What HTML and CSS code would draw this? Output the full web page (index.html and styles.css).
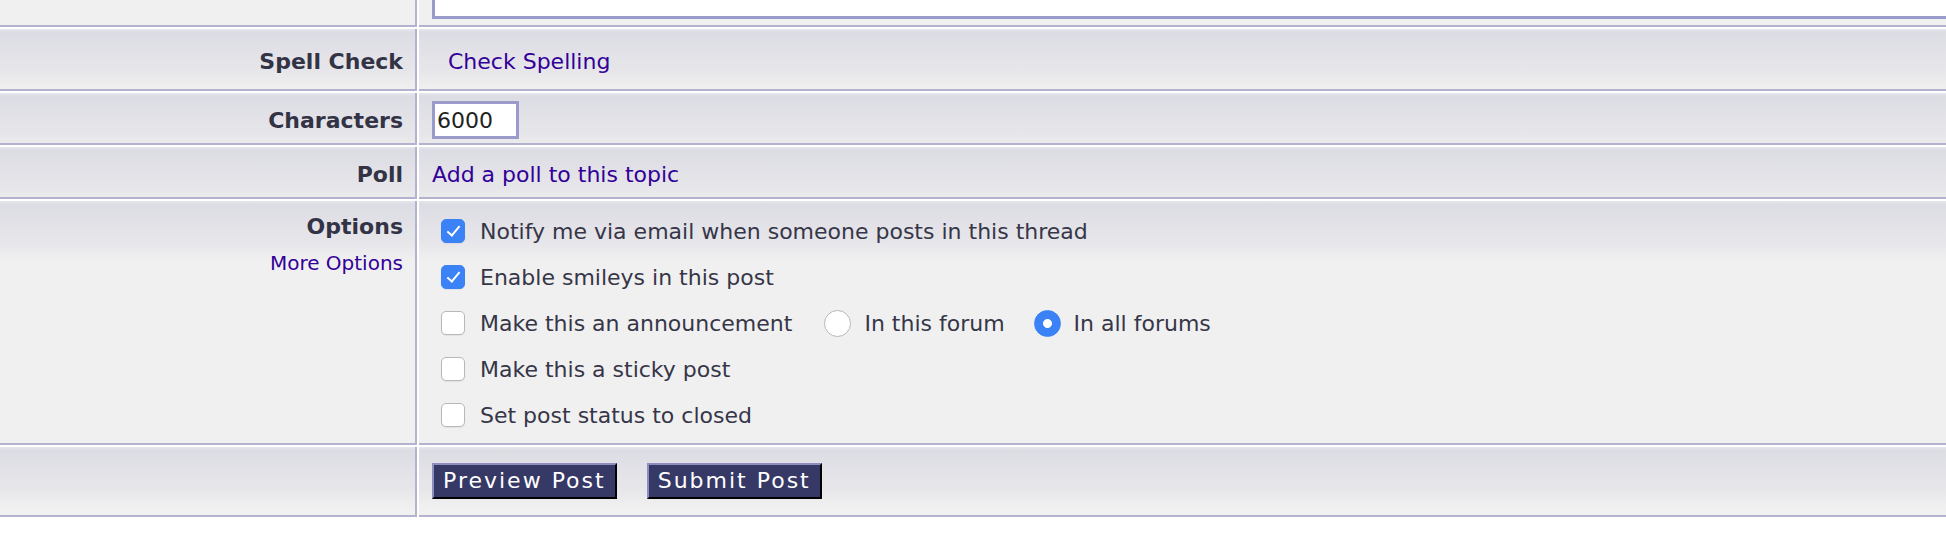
FILE: index.html
```html
<!DOCTYPE html>
<html lang="en">

<head>
    <meta charset="UTF-8">
    <title>Post Reply</title>
    <link rel="stylesheet" href="styles.css">
</head>

<body>
    <form id="post">
        <table id="form">
            <tr class="msg">
                <td class="label"></td>
                <td class="field"><textarea class="body"></textarea></td>
            </tr>
            <tr class="line">
                <td class="label spell-row">Spell Check</td>
                <td class="field spell-row"><a class="spell" href="javascript:;">Check Spelling</a></td>
            </tr>
            <tr class="line">
                <td class="label">Characters</td>
                <td class="field"><input class="count" type="text" value="6000"></td>
            </tr>
            <tr class="line">
                <td class="label">Poll</td>
                <td class="field"><a href="javascript:;">Add a poll to this topic</a></td>
            </tr>
            <tr class="opts">
                <td class="label">
                    Options
                    <a class="more" href="javascript:;">More Options</a>
                </td>
                <td class="field">
                    <label class="opt"><input type="checkbox" checked>Notify me via email when someone posts in this thread</label>
                    <label class="opt"><input type="checkbox" checked>Enable smileys in this post</label>
                    <div class="opt">
                        <input type="checkbox">Make this an announcement
                        <input class="first" type="radio" name="where">In this forum
                        <input type="radio" name="where" checked>In all forums
                    </div>
                    <label class="opt"><input type="checkbox">Make this a sticky post</label>
                    <label class="opt"><input type="checkbox">Set post status to closed</label>
                </td>
            </tr>
            <tr class="btns">
                <td class="label"></td>
                <td class="field">
                    <div class="buttons">
                        <button type="button">Preview Post</button>
                        <button type="button">Submit Post</button>
                    </div>
                </td>
            </tr>
        </table>
    </form>
</body>

</html>
```

FILE: styles.css
```css
body {
    margin: 0;
    background: #fff;
    font-family: "DejaVu Sans", Verdana, sans-serif;
    font-size: 22px;
    color: #363648;
    overflow: hidden;
}

a {
    color: #330099;
    text-decoration: none;
}

#form {
    table-layout: fixed;
    width: calc(100% + 4px);
    margin: -83px -2px 0;
    border-collapse: separate;
    border-spacing: 2px;
}

#form td {
    box-sizing: border-box;
    padding: 0;
    border-bottom: 2px solid #b3b3cf;
    background: #f0f0f0 linear-gradient(#e7e7ec 0, #dcdce4 3px, #e6e6ea 40px, #f0f0f0 60px) no-repeat;
    background-size: 100% 60px;
}

#form .label {
    width: 417px;
    padding-right: 12px;
    border-right: 2px solid #b3b3cf;
    text-align: right;
    font-weight: bold;
    color: #333346;
}

#form .field {
    padding-left: 13px;
    white-space: nowrap;
}

/* message row, only its bottom shows */
#form .msg td {
    background: #f0f0f0;
}

#form .msg .field {
    padding-bottom: 6px;
}

.body {
    display: block;
    box-sizing: border-box;
    width: 1600px;
    height: 100px;
    border: 3px solid #9a9acb;
    background: #fff;
    resize: none;
}

#form .line td {
    height: 52px;
    padding-top: 4px;
}

#form .line .spell-row {
    height: 62px;
}

.spell {
    padding-left: 16px;
}

.count {
    box-sizing: border-box;
    width: 87px;
    height: 38px;
    padding: 0 2px;
    border: 3px solid #9a9acb;
    font-family: "DejaVu Sans", Verdana, sans-serif;
    font-size: 22px;
    color: #222;
    vertical-align: middle;
}

/* options */
#form .opts .label {
    vertical-align: top;
    padding-top: 13px;
}

.more {
    display: block;
    margin-top: 12px;
    font-size: 20px;
    font-weight: normal;
}

#form .opts .field {
    padding-top: 7px;
    padding-bottom: 5px;
}

.opt {
    display: flex;
    align-items: center;
    height: 46px;
}

.opt input[type=checkbox] {
    appearance: none;
    -webkit-appearance: none;
    position: relative;
    width: 24px;
    height: 24px;
    margin: 0 15px 0 9px;
    border: 1px solid #b8b8bc;
    border-radius: 5px;
    background: #fff;
    box-shadow: 0 1px 1px rgba(0, 0, 0, .06);
}

.opt input[type=checkbox]:checked {
    border-color: #3a82f6;
    background: #3a82f6;
}

.opt input[type=checkbox]:checked::after {
    content: "";
    position: absolute;
    left: 8px;
    top: 3px;
    width: 5px;
    height: 11px;
    border: solid #fff;
    border-width: 0 2px 2px 0;
    transform: rotate(40deg);
}

.opt input[type=radio] {
    appearance: none;
    -webkit-appearance: none;
    width: 27px;
    height: 27px;
    margin: 0 13px 0 29px;
    border: 1px solid #b8b8bc;
    border-radius: 50%;
    background: #fff;
}

.opt input.first {
    margin-left: 32px;
}

.opt input[type=radio]:checked {
    border-color: #3a82f6;
    background: radial-gradient(circle, #fff 0 4px, #3a82f6 5px);
}

/* buttons */
#form .btns td {
    height: 70px;
}

.buttons {
    display: flex;
    gap: 30px;
}

.buttons button {
    padding: 3px 9px;
    border: 2px solid;
    border-color: #8d8dc0 #000 #000 #8d8dc0;
    background: #363966;
    color: #fff;
    font-family: "DejaVu Sans", Verdana, sans-serif;
    font-size: 22px;
    line-height: 26px;
    letter-spacing: 2px;
}
```
